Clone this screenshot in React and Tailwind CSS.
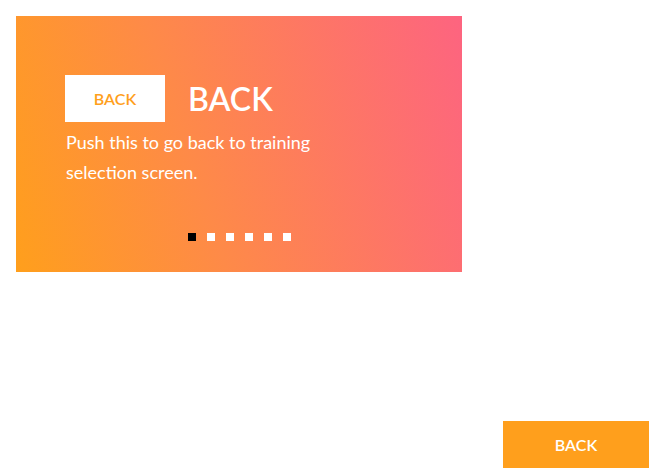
const Dots = ({ count, active }) => (
  <div className="flex justify-center gap-[11px]">
    {Array.from({ length: count }).map((_, i) => (
      <span
        key={i}
        className={`block w-2 h-2 ${i === active ? "bg-black" : "bg-white"}`}
      />
    ))}
  </div>
);

export default function App() {
  return (
    <div
      className="min-h-screen flex flex-col bg-white"
      style={{ fontFamily: "Lato, 'Open Sans', sans-serif" }}
    >
      <div className="p-4">
        <div className="w-[446px] h-[256px] bg-[linear-gradient(72deg,#ff9f1c_0%,#fe8a48_40%,#fd6480_100%)] pl-[49px] pt-[59px] pr-6 flex flex-col">
          <div className="flex items-center">
            <div className="w-[100px] h-[47px] bg-white flex items-center justify-center text-[#ff9f1c] text-[16px] font-semibold">
              BACK
            </div>
            <h1 className="ml-[23px] text-white text-[32px] font-semibold leading-none">
              BACK
            </h1>
          </div>
          <p className="mt-[5px] ml-px text-white text-[18px] leading-[30px] w-[280px]">
            Push this to go back to training selection screen.
          </p>
          <div className="mt-auto mb-[31px] -ml-[49px] -mr-6">
            <Dots count={6} active={0} />
          </div>
        </div>
      </div>
      <div className="mt-auto self-end">
        <button className="w-[146px] h-[47px] bg-[#ff9f1c] text-white text-[16px] font-semibold">
          BACK
        </button>
      </div>
    </div>
  );
}
